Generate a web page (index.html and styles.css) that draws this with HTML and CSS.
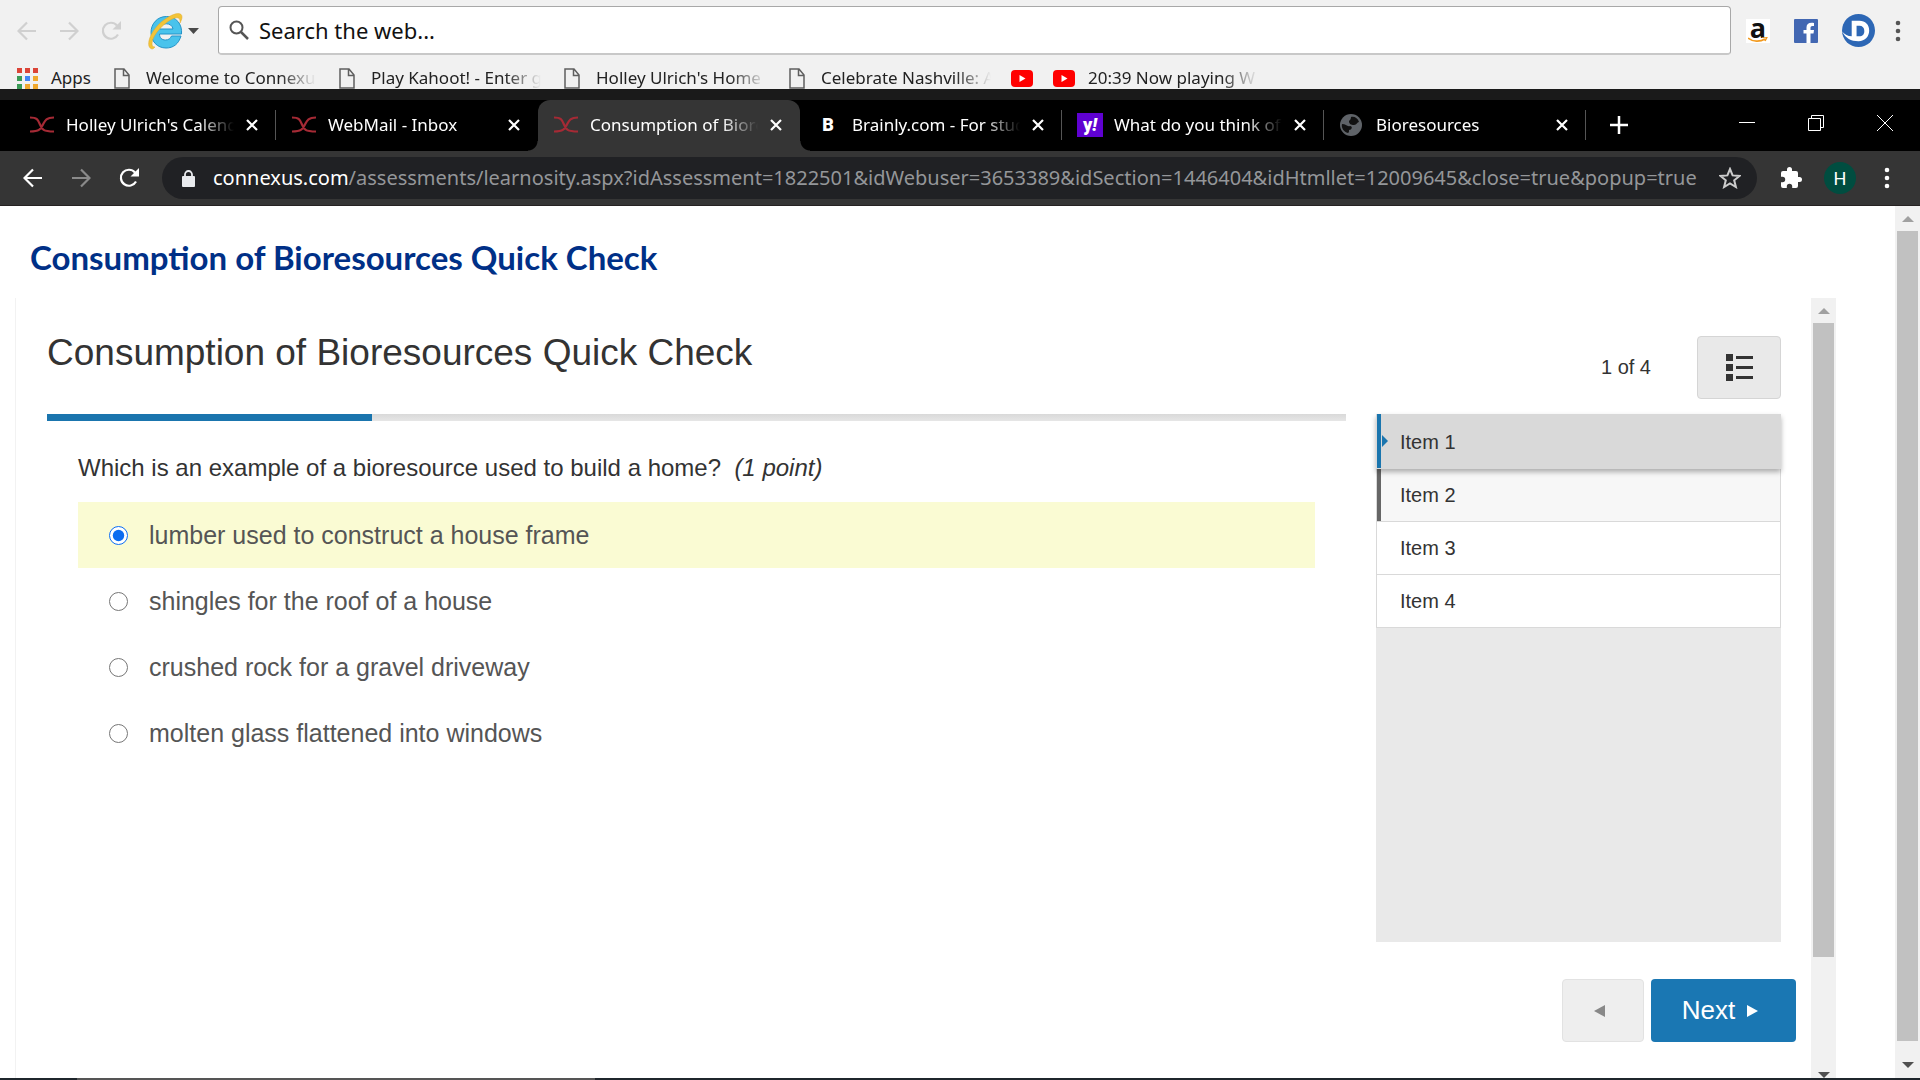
FILE: index.html
```html
<!DOCTYPE html>
<html lang="en">
<head>
    <meta charset="UTF-8">
    <meta name="viewport" content="width=device-width, initial-scale=1.0">
    <title>Consumption of Bioresources Quick Check</title>
    <link rel="stylesheet" href="styles.css">
</head>
<body>
    <!-- icons used more than once -->
    <svg class="sprite" aria-hidden="true">
        <symbol id="arrow" viewBox="0 0 20 20"><path d="M19 10H2M10 1.500 1.500 10l8.500 8.500" fill="none" stroke="currentColor" stroke-width="2.200"/></symbol>
        <symbol id="reload" viewBox="0 0 20 20"><path d="M17 13.500A8 8 0 1 1 16 4.500" fill="none" stroke="currentColor" stroke-width="2.200"/><path d="M20 0v8.500h-8.500z" fill="currentColor"/></symbol>
        <symbol id="page" viewBox="0 0 16 21"><path d="M1 1h9l5 6v13H1zM9.500 1v6.500H15" fill="none" stroke="#5f5f5f" stroke-width="1.500"/></symbol>
        <symbol id="youtube" viewBox="0 0 22 17"><rect width="22" height="17" rx="4" fill="#f00"/><path d="M8.500 5v7l6-3.500z" fill="#fff"/></symbol>
        <symbol id="connexus" viewBox="0 0 26 17"><path d="M1 1.500c7 0 8 2 10 7s3 7 14 7M25 1.500c-8 0-9 3-11 7s-3 7-13 7" fill="none" stroke="#a52a35" stroke-width="2.200"/></symbol>
        <symbol id="close" viewBox="0 0 12 12"><path d="M1 1l10 10M11 1 1 11" fill="none" stroke="currentColor" stroke-width="2.200"/></symbol>
        <symbol id="dots" viewBox="0 0 6 22"><g fill="currentColor"><circle cx="3" cy="3" r="2.300"/><circle cx="3" cy="11" r="2.300"/><circle cx="3" cy="19" r="2.300"/></g></symbol>
    </svg>

    <header class="search-bar">
        <nav class="history">
            <button aria-label="Back"><svg width="20" height="20"><use href="#arrow"/></svg></button>
            <button aria-label="Forward"><svg class="flip" width="20" height="20"><use href="#arrow"/></svg></button>
            <button aria-label="Reload"><svg width="20" height="20"><use href="#reload"/></svg></button>
        </nav>
        <button class="engine" aria-label="Browser">
            <svg width="36" height="38" viewBox="0 0 36 38">
                <path d="M34 24h-9.500c-1 2.500-3 4-6 4-4 0-6-2.500-6-6H34.500C35.500 12 29 4.500 19.500 4.500S4 12 4 20.500 10 36 19 36c7.500 0 12.500-4 15-12zM12.500 17c1-7 12.500-7 13.500 0z" fill="#49c3ec" stroke="#2493c8"/>
                <path d="M5 37C-3 35 4 16 19 6.500 28 .5 35 0 35 5c0 2-1 4-2 6 .5-4-1-6-5-5C20 8 5 22 5 32c0 2 1 3 3 3-1 1-2 2-3 2z" fill="#f2c438" stroke="#e0a92a" stroke-width=".5"/>
            </svg>
            <svg width="11" height="6" viewBox="0 0 11 6"><path d="M0 0h11L5.500 6z" fill="#4a4a4a"/></svg>
        </button>
        <label class="search">
            <svg width="20" height="20" viewBox="0 0 20 20"><circle cx="7.500" cy="7.500" r="6" fill="none" stroke="#555" stroke-width="2"/><path d="M12 12l7 7" stroke="#555" stroke-width="2.500"/></svg>
            <input type="text" value="Search the web..." aria-label="Search the web">
        </label>
        <div class="shortcuts">
            <a href="#" aria-label="Amazon" class="amazon">a<svg width="20" height="6" viewBox="0 0 20 6"><path d="M0 1c5 4 12 4 17 1M14 0h5l-2 4" fill="none" stroke="#f29a1f" stroke-width="1.600"/></svg></a>
            <a href="#" aria-label="Facebook"><svg width="24" height="24" viewBox="0 0 24 24"><rect width="24" height="24" rx="1" fill="#4267b2"/><path d="M16.500 24v-9.500h3l.5-3.500h-3.500V9c0-1.200.5-2 2-2H20V4c-5-.8-7.500.8-7.500 4.500V11h-3v3.500h3V24z" fill="#fff"/></svg></a>
            <a href="#" aria-label="D"><svg width="33" height="33" viewBox="0 0 34 34"><circle cx="17" cy="17" r="17" fill="#2d67b5"/><path d="M10 7h8c6 0 10 4 10 10s-4 11-11 11C9 28 4 25 0 18c3 3 6 5 10 5z" fill="#fff"/><path d="M15 12h3c3 0 5 2 5 5.500S21 23 18 23h-3z" fill="#2d67b5"/></svg></a>
        </div>
        <button class="menu" aria-label="Menu"><svg width="6" height="22"><use href="#dots"/></svg></button>
    </header>

    <nav class="bookmarks">
        <a href="#" class="apps">
            <svg width="21" height="21" viewBox="0 0 21 21">
                <path d="M0 0h5v5H0zM8 0h5v5H8zM16 0h5v5h-5z" fill="#db4437"/>
                <path d="M0 8h5v5H0zM0 16h5v5H0z" fill="#3a9b56"/><path d="M8 8h5v5H8z" fill="#4285f4"/>
                <path d="M16 8h5v5h-5zM8 16h5v5H8zM16 16h5v5h-5z" fill="#f0a92e"/>
            </svg>
            <span>Apps</span>
        </a>
        <a href="#" class="bookmark"><svg width="16" height="21"><use href="#page"/></svg><span class="fade">Welcome to Connexu</span></a>
        <a href="#" class="bookmark"><svg width="16" height="21"><use href="#page"/></svg><span class="fade">Play Kahoot! - Enter g</span></a>
        <a href="#" class="bookmark"><svg width="16" height="21"><use href="#page"/></svg><span class="fade">Holley Ulrich's Home</span></a>
        <a href="#" class="bookmark"><svg width="16" height="21"><use href="#page"/></svg><span class="fade">Celebrate Nashville: A</span></a>
        <a href="#" class="video" aria-label="YouTube"><svg width="22" height="17"><use href="#youtube"/></svg></a>
        <a href="#" class="video"><svg width="22" height="17"><use href="#youtube"/></svg><span class="fade">20:39 Now playing W</span></a>
    </nav>

    <div class="tab-strip">
        <div class="tab">
            <svg width="26" height="17"><use href="#connexus"/></svg><span class="fade">Holley Ulrich's Calend</span>
            <button aria-label="Close tab"><svg width="12" height="12"><use href="#close"/></svg></button>
        </div>
        <div class="tab plain">
            <svg width="26" height="17"><use href="#connexus"/></svg><span class="fade">WebMail - Inbox</span>
            <button aria-label="Close tab"><svg width="12" height="12"><use href="#close"/></svg></button>
        </div>
        <div class="tab active">
            <svg width="26" height="17"><use href="#connexus"/></svg><span class="fade">Consumption of Biore</span>
            <button aria-label="Close tab"><svg width="12" height="12"><use href="#close"/></svg></button>
        </div>
        <div class="tab">
            <b class="brainly">B</b><span class="fade">Brainly.com - For stud</span>
            <button aria-label="Close tab"><svg width="12" height="12"><use href="#close"/></svg></button>
        </div>
        <div class="tab">
            <b class="yahoo">y<i>!</i></b><span class="fade">What do you think of</span>
            <button aria-label="Close tab"><svg width="12" height="12"><use href="#close"/></svg></button>
        </div>
        <div class="tab">
            <svg width="26" height="22" viewBox="0 0 26 22"><circle cx="12" cy="11" r="11" fill="#5f6368"/><path d="M3 10c4 0 5 3 8 2 3 0 2 4-1 4 0 2 0 2-1 3-4-1-7-5-6-9zM12 3c3-1 7 1 8 5-2 0-2 3-5 3s-5-1-5-4c1-1 2-2 2-4z" fill="#111"/></svg><span class="fade">Bioresources</span>
            <button aria-label="Close tab"><svg width="12" height="12"><use href="#close"/></svg></button>
        </div>
        <button class="new-tab" aria-label="New tab"><svg width="18" height="18" viewBox="0 0 18 18"><path d="M9 0v18M0 9h18" stroke="#fff" stroke-width="2.500"/></svg></button>
        <div class="window-buttons">
            <button aria-label="Minimize"><svg width="16" height="16" viewBox="0 0 16 16"><path d="M0 7.500h16" stroke="#fff"/></svg></button>
            <button aria-label="Restore"><svg width="16" height="16" viewBox="0 0 16 16"><path d="M.5 3.500h12v12H.5zM3.500 3.500v-3h12v12h-3" fill="none" stroke="#fff"/></svg></button>
            <button aria-label="Close"><svg width="16" height="16" viewBox="0 0 16 16"><path d="M0 0l16 16M16 0 0 16" stroke="#fff"/></svg></button>
        </div>
    </div>

    <div class="address-bar">
        <nav class="history">
            <button aria-label="Back"><svg width="20" height="20"><use href="#arrow"/></svg></button>
            <button aria-label="Forward" class="dim"><svg class="flip" width="20" height="20"><use href="#arrow"/></svg></button>
            <button aria-label="Reload"><svg width="20" height="20"><use href="#reload"/></svg></button>
        </nav>
        <div class="address">
            <svg width="13" height="17" viewBox="0 0 13 17"><rect y="6" width="13" height="11" rx="1" fill="#e8eaed"/><path d="M3 7V4.500a3.500 3.500 0 0 1 7 0V7" fill="none" stroke="#e8eaed" stroke-width="1.800"/></svg>
            <p><b>connexus.com</b>/assessments/learnosity.aspx?idAssessment=1822501&amp;idWebuser=3653389&amp;idSection=1446404&amp;idHtmllet=12009645&amp;close=true&amp;popup=true</p>
            <button aria-label="Bookmark"><svg width="22" height="22" viewBox="0 0 22 22"><path d="M11 2l2.600 6.400 6.900.5-5.300 4.400 1.700 6.700L11 16.400 5.100 20l1.700-6.700L1.500 8.900l6.900-.5z" fill="none" stroke="#ccc" stroke-width="2"/></svg></button>
        </div>
        <div class="tools">
            <button aria-label="Extensions"><svg width="22" height="22" viewBox="1 1 22 22"><path d="M20.500 11H19V7a2 2 0 0 0-2-2h-4V3.500a2.500 2.500 0 0 0-5 0V5H4a2 2 0 0 0-2 2v3.800h1.500a2.700 2.700 0 0 1 0 5.400H2V20a2 2 0 0 0 2 2h3.800v-1.500a2.700 2.700 0 0 1 5.400 0V22H17a2 2 0 0 0 2-2v-4h1.500a2.500 2.500 0 0 0 0-5z" fill="#fff"/></svg></button>
            <button class="avatar">H</button>
        </div>
        <button class="menu" aria-label="Menu"><svg width="6" height="22"><use href="#dots"/></svg></button>
    </div>

    <div class="viewport">
        <main class="page">
            <h1>Consumption of Bioresources Quick Check</h1>
            <div class="frame">
                <div class="assessment">
                    <section class="question">
                        <h2>Consumption of Bioresources Quick Check</h2>
                        <div class="progress"><div></div></div>
                        <fieldset>
                            <legend>Which is an example of a bioresource used to build a home?&nbsp; <em>(1 point)</em></legend>
                            <label><input type="radio" name="answer" checked>lumber used to construct a house frame</label>
                            <label><input type="radio" name="answer">shingles for the roof of a house</label>
                            <label><input type="radio" name="answer">crushed rock for a gravel driveway</label>
                            <label><input type="radio" name="answer">molten glass flattened into windows</label>
                        </fieldset>
                    </section>
                    <aside class="sidebar">
                        <div class="counter">
                            <span>1 of 4</span>
                            <button aria-label="Item list"><svg width="27" height="27" viewBox="0 0 27 27"><path d="M0 0h7v7H0zM0 10h7v7H0zM0 20h7v7H0zM10 2h17v3H10zM10 12h17v3H10zM10 22h17v3H10z" fill="#333"/></svg></button>
                        </div>
                        <ul class="items">
                            <li class="current"><a href="#">Item 1</a></li>
                            <li class="hover"><a href="#">Item 2</a></li>
                            <li><a href="#">Item 3</a></li>
                            <li><a href="#">Item 4</a></li>
                        </ul>
                        <div class="pager">
                            <button class="prev" aria-label="Previous" disabled><svg width="11" height="12" viewBox="0 0 11 12"><path d="M11 0v12L0 6z" fill="#888"/></svg></button>
                            <button class="next">Next <svg width="11" height="12" viewBox="0 0 11 12"><path d="M0 0v12l11-6z" fill="#fff"/></svg></button>
                        </div>
                    </aside>
                </div>
                <div class="scrollbar inner">
                    <svg width="12" height="6" viewBox="0 0 12 6"><path d="M0 6h12L6 0z" fill="#a0a0a0"/></svg>
                    <div class="thumb"></div>
                    <svg width="12" height="6" viewBox="0 0 12 6"><path d="M0 0h12L6 6z" fill="#505050"/></svg>
                </div>
            </div>
        </main>
        <div class="scrollbar">
            <svg width="12" height="6" viewBox="0 0 12 6"><path d="M0 6h12L6 0z" fill="#a0a0a0"/></svg>
            <div class="thumb"></div>
            <svg width="12" height="6" viewBox="0 0 12 6"><path d="M0 0h12L6 6z" fill="#505050"/></svg>
        </div>
    </div>
    <div class="taskbar"></div>
</body>
</html>
```
FILE: styles.css
```css
* {
    box-sizing: border-box;
}
body {
    display: flex;
    flex-direction: column;
    min-height: 100vh;
    margin: 0;
    font-family: "Liberation Sans", Arial, sans-serif;
    color: #333;
    background: #fff;
}
button {
    display: flex;
    align-items: center;
    justify-content: center;
    padding: 0;
    border: 0;
    background: none;
    color: inherit;
    font: inherit;
}
a {
    color: inherit;
    text-decoration: none;
}
svg {
    display: block;
    flex: none;
}
.sprite {
    position: absolute;
    width: 0;
    height: 0;
}
.flip {
    transform: scaleX(-1);
}
.fade {
    overflow: hidden;
    white-space: nowrap;
    mask-image: linear-gradient(to left, transparent, #000 36px);
}

/* search window */
.search-bar {
    display: flex;
    align-items: center;
    height: 61px;
    padding: 0 19px 0 17px;
    background: #f1f1f1;
    font-family: "Noto Sans", sans-serif;
}
.history {
    display: flex;
    gap: 22px;
    color: #d0d0d0;
}
.engine {
    gap: 5px;
    margin: 0 19px 0 26px;
}
.search {
    display: flex;
    flex: 1;
    align-items: center;
    gap: 10px;
    height: 49px;
    padding: 0 10px;
    border: 1px solid #a8a8a8;
    border-bottom: 2px solid #c8c8c8;
    border-radius: 4px;
    background: #fff;
}
.search input {
    flex: 1;
    padding: 0;
    border: 0;
    outline: 0;
    font: 22px/30px "Noto Sans", sans-serif;
    color: #111;
}
.shortcuts {
    display: flex;
    align-items: center;
    gap: 24px;
    margin: 0 20px 0 15px;
}
.menu {
    color: #555;
}
.amazon {
    display: flex;
    flex-direction: column;
    align-items: center;
    width: 24px;
    height: 24px;
    background: #fff;
    color: #111;
    font: bold 27px/18px "Open Sans", sans-serif;
}

.bookmarks {
    display: flex;
    align-items: center;
    height: 28px;
    padding: 6px 17px 0;
    overflow: hidden;
    background: #f1f1f1;
    color: #222;
    font: 17px/22px "Noto Sans", sans-serif;
}
.apps, .bookmark, .video {
    display: flex;
    align-items: center;
}
.apps {
    gap: 13px;
    width: 97px;
}
.bookmark {
    gap: 16px;
    width: 222px;
}
.bookmark + .bookmark {
    margin-left: 3px;
}
.bookmark .fade {
    width: 170px;
}
.video {
    gap: 13px;
    margin-right: 20px;
}
.video .fade {
    width: 170px;
}

/* browser window */
.tab-strip {
    display: flex;
    align-items: stretch;
    height: 62px;
    padding-left: 14px;
    border-top: 11px solid #1a1a1a;
    background: #000;
    color: #fff;
    font: 17px/24px "Noto Sans", sans-serif;
}
.tab {
    position: relative;
    display: flex;
    align-items: center;
    width: 262px;
    padding: 0 18px 2px 15px;
}
.tab .fade {
    flex: 1;
    margin: 0 12px 0 11px;
}
.tab::after {
    content: "";
    position: absolute;
    right: 0;
    width: 1px;
    height: 30px;
    background: #555;
}
.tab.plain::after {
    display: none;
}
.tab.active {
    border-radius: 12px 12px 0 0;
    background: #353535;
}
/* curved feet of the open tab */
.tab.active::before, .tab.active::after {
    content: "";
    position: absolute;
    bottom: 0;
    width: 10px;
    height: 10px;
}
.tab.active::before {
    left: -10px;
    background: radial-gradient(circle at 0 0, #000 9px, #353535 10px);
}
.tab.active::after {
    right: -10px;
    background: radial-gradient(circle at 100% 0, #000 9px, #353535 10px);
}
.brainly, .yahoo {
    width: 26px;
    text-align: center;
    font: 900 18px/24px Roboto, sans-serif;
}
.yahoo {
    background: #5f01d1;
}
.new-tab {
    margin-left: 24px;
    padding-bottom: 2px;
}
.window-buttons {
    display: flex;
    gap: 53px;
    margin: 0 27px 6px auto;
}

.address-bar {
    display: flex;
    align-items: center;
    height: 55px;
    padding: 0 30px 0 23px;
    border-bottom: 1px solid #262222;
    background: #353535;
    color: #fff;
}
.address-bar .history {
    gap: 28px;
    margin-right: 23px;
    color: #fff;
}
.address-bar .dim {
    color: #8a8a8a;
}
.address-bar .menu {
    color: #fff;
}
.address {
    display: flex;
    flex: 1;
    align-items: center;
    min-width: 0;
    height: 42px;
    padding: 0 16px 0 20px;
    border-radius: 21px;
    background: #202124;
    color: #949699;
    font: 20px/28px "Noto Sans", sans-serif;
}
.address p {
    flex: 1;
    margin: 0 18px;
    overflow: hidden;
    white-space: nowrap;
}
.address b {
    color: #fff;
    font-weight: normal;
}
.tools {
    display: flex;
    align-items: center;
    gap: 22px;
    margin: 0 28px 0 23px;
}
.avatar {
    width: 32px;
    height: 32px;
    border-radius: 50%;
    background: #004d40;
    font: 18px Roboto, sans-serif;
}

/* page */
.viewport {
    display: flex;
    flex: 1;
}
.page {
    display: flex;
    flex: 1;
    flex-direction: column;
    padding: 28px 59px 0 15px;
}
h1 {
    margin: 0 0 18px 15px;
    color: #003087;
    font: bold 33px/46px Lato, sans-serif;
}
.frame {
    display: flex;
    flex: 1;
    border-left: 1px solid #f2f2f2;
}
.assessment {
    display: flex;
    flex: 1;
    gap: 30px;
    padding: 28px 15px 36px 31px;
}
.question {
    flex: 1;
}
h2 {
    margin: 0 0 34px;
    font: 37px/54px "Liberation Sans", Arial, sans-serif;
}
.progress {
    height: 7px;
    background: linear-gradient(#d9d9d9, #e6e6e6);
}
.progress div {
    width: 25%;
    height: 7px;
    background: #1a75ae;
}
fieldset {
    margin: 0 31px;
    padding: 0;
    border: 0;
}
legend {
    padding: 32px 0 19px;
    font-size: 24px;
    line-height: 30px;
}
fieldset label {
    display: flex;
    align-items: center;
    gap: 21px;
    height: 66px;
    padding-left: 31px;
    color: #555;
    font-size: 25px;
}
fieldset label:has(:checked) {
    background: #fafbd3;
}
fieldset input {
    width: 19px;
    height: 19px;
    margin: 0;
    accent-color: #0b6cf0;
}
.sidebar {
    display: flex;
    flex-direction: column;
    width: 420px;
    font-size: 20px;
}
.counter {
    display: flex;
    align-items: center;
    justify-content: flex-end;
    gap: 46px;
    margin: 0 15px 15px 0;
    padding-top: 10px;
}
.counter button {
    width: 84px;
    height: 63px;
    border: 1px solid #d5d5d5;
    border-radius: 4px;
    background: #e9e9e9;
}
.items {
    flex: 1;
    margin: 0 15px 37px 0;
    padding: 0;
    background: #e9e9e9;
    list-style: none;
}
.items li {
    position: relative;
    border: 1px solid #d9d9d9;
    border-top: 0;
    background: #fff;
}
.items a {
    display: block;
    padding: 0 19px;
    border-left: 4px solid transparent;
    line-height: 52px;
}
.items .current {
    z-index: 1;
    background: #d9d9d9;
    box-shadow: 0 3px 5px rgba(0, 0, 0, 0.3);
}
.items .current a {
    border-color: #1a75ae;
    padding-top: 2px;
}
.items .current::after {
    content: "";
    position: absolute;
    top: 21px;
    left: 5px;
    border: 6px solid transparent;
    border-left-color: #1a75ae;
    border-right: 0;
}
.items .hover {
    background: #f7f7f7;
}
.items .hover a {
    border-color: #666;
}
.pager {
    display: flex;
    justify-content: flex-end;
    gap: 7px;
}
.pager button {
    height: 63px;
    padding-right: 7px;
    border-radius: 4px;
}
.prev {
    width: 82px;
    border: 1px solid #e2e2e2;
    background: #eee;
}
.pager .next {
    gap: 12px;
    width: 145px;
    background: #1a77b3;
    color: #fff;
    font-size: 26px;
}

.scrollbar {
    display: flex;
    flex-direction: column;
    align-items: center;
    width: 25px;
    padding: 10px 0;
    background: #f1f1f1;
}
.scrollbar .thumb {
    flex: 1;
    width: 21px;
    margin: 9px 0 21px;
    background: #c1c1c1;
}
.scrollbar.inner {
    padding-bottom: 0;
}
.scrollbar.inner .thumb {
    margin-bottom: 115px;
}
.taskbar {
    height: 2px;
    background: linear-gradient(to right, #1f262c 4%, #555 4%, #555 31%, #1f262c 31%);
}
```
